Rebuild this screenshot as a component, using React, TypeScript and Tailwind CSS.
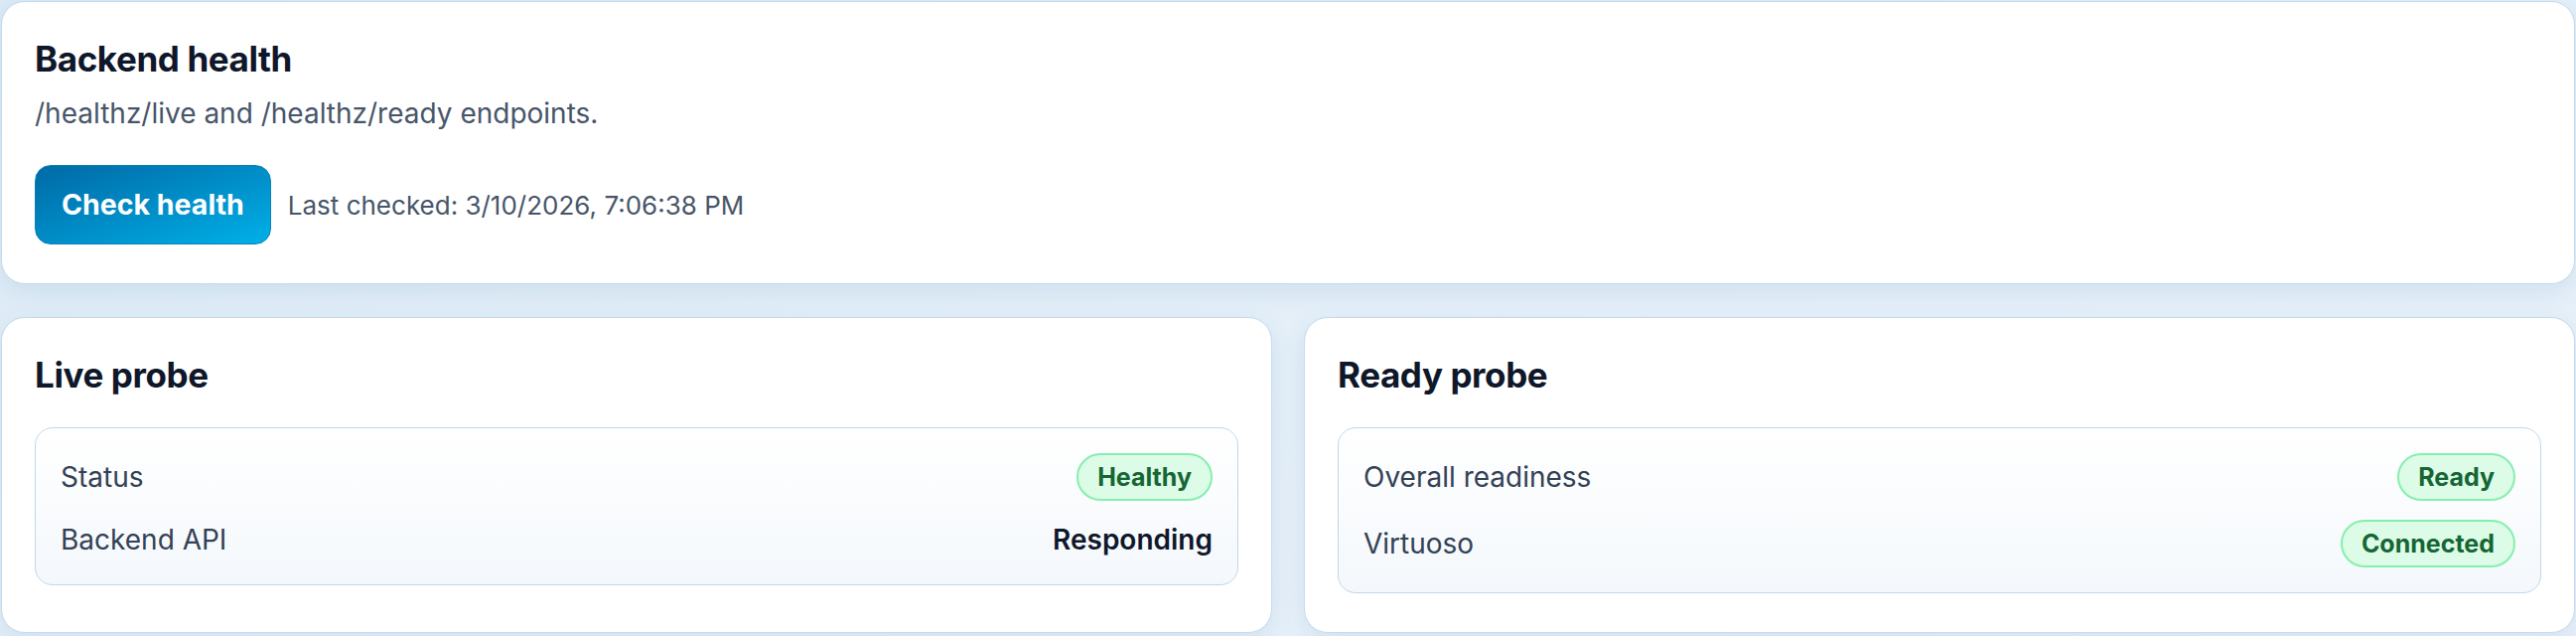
import React from "react";

const font = { fontFamily: "Inter, 'Noto Sans', sans-serif" };

function Badge({ children }: { children: React.ReactNode }) {
  return (
    <span className="inline-flex h-[48px] items-center rounded-full border-2 border-[#86efac] bg-[#dcfce7] px-[19px] text-[25px] font-bold leading-none text-[#166534]">
      {children}
    </span>
  );
}

function Row({ label, children }: { label: string; children: React.ReactNode }) {
  return (
    <div className="flex min-h-[40px] items-center justify-between">
      <span className="text-[28px] leading-[40px] text-[#334155]">{label}</span>
      {children}
    </div>
  );
}

function ProbeCard({ title, children }: { title: string; children: React.ReactNode }) {
  return (
    <section className="rounded-[24px] border border-[#c3dbed] bg-white px-[33px] pt-[33px] pb-[39px] shadow-[0_8px_24px_rgba(30,100,160,0.10)]">
      <h2 className="text-[35px] font-bold leading-[48px] tracking-[-0.4px] text-[#0f172a]">{title}</h2>
      <div className="mt-[29px] flex flex-col gap-[19px] rounded-[18px] border border-[#bfd8ea] bg-gradient-to-b from-white to-[#f4f8fc] p-[25px]">
        {children}
      </div>
    </section>
  );
}

export default function App() {
  return (
    <div style={font} className="min-h-screen bg-gradient-to-br from-[#dbeaf5] via-[#e4eff8] to-[#e8f1f9] px-[1px] pt-[1px]">
      <div className="flex flex-col gap-[33px]">
        <section className="rounded-[24px] border border-[#c3dbed] bg-white px-[33px] pt-[33px] pb-[39px] shadow-[0_8px_24px_rgba(30,100,160,0.10)]">
          <h1 className="text-[35px] font-bold leading-[48px] tracking-[-0.4px] text-[#0f172a]">Backend health</h1>
          <p className="mt-[11px] text-[28px] leading-[40px] text-[#475569]">/healthz/live and /healthz/ready endpoints.</p>
          <div className="mt-[32px] flex items-center gap-[17px]">
            <button className="h-[80px] rounded-[16px] border border-[#0a7fb8] bg-gradient-to-br from-[#006aa6] to-[#00b0e8] px-[26px] text-[28.5px] font-bold text-white">
              Check health
            </button>
            <span className="text-[26px] text-[#475569]">Last checked: 3/10/2026, 7:06:38 PM</span>
          </div>
        </section>
        <div className="grid grid-cols-2 gap-[32px]">
          <ProbeCard title="Live probe">
            <Row label="Status">
              <Badge>Healthy</Badge>
            </Row>
            <Row label="Backend API">
              <span className="text-[28px] font-semibold leading-[40px] text-[#0f172a]">Responding</span>
            </Row>
          </ProbeCard>
          <ProbeCard title="Ready probe">
            <Row label="Overall readiness">
              <Badge>Ready</Badge>
            </Row>
            <Row label="Virtuoso">
              <Badge>Connected</Badge>
            </Row>
          </ProbeCard>
        </div>
      </div>
    </div>
  );
}
